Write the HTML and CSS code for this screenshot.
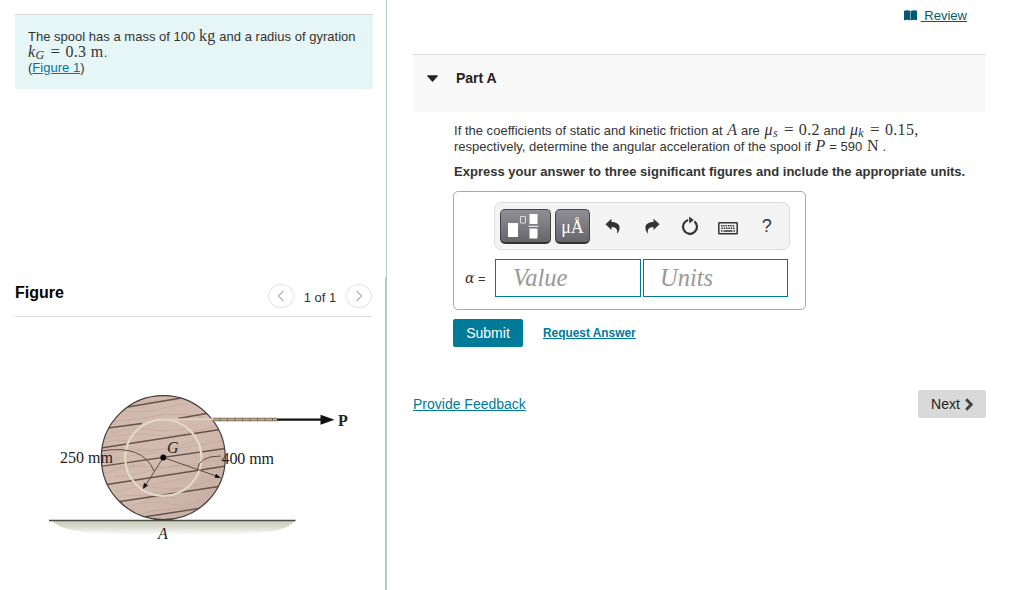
FILE: index.html
```html
<!DOCTYPE html>
<html lang="en">
<head>
  <meta charset="utf-8"/>
  <title>Part A</title>
  <link rel="stylesheet" href="styles.css">
</head>
<body>
<div class="page">

  <div class="left">
    <div class="left-top">
      <div class="problem">
        <div class="line">The spool has a mass of 100 <span class="math">kg</span> and a radius of gyration</div>
        <div class="line"><span class="math"><i>k</i><i class="sub">G</i><span class="eq">=</span>0.3 m</span>.</div>
        <div class="line">(<a href="#">Figure 1</a>)</div>
      </div>
    </div>
    <div class="left-bottom">
      <div class="figure-head">
        <h2>Figure</h2>
        <div class="pager">
          <button class="round"><svg width="8" height="12" viewBox="0 0 8 12"><path d="M6.5 1 L1.5 6 L6.5 11"/></svg></button>
          <span>1 of 1</span>
          <button class="round"><svg width="8" height="12" viewBox="0 0 8 12"><path d="M1.5 1 L6.5 6 L1.5 11"/></svg></button>
        </div>
      </div>
      <svg class="spool" width="370" height="170" viewBox="0 385 370 170">
        <defs>
          <clipPath id="disc"><circle cx="163.3" cy="457.7" r="62"/></clipPath>
          <linearGradient id="ground" x1="0" y1="0" x2="0" y2="1">
            <stop offset="0" stop-color="#cccebe"/>
            <stop offset=".4" stop-color="#d9dace"/>
            <stop offset="1" stop-color="#fff"/>
          </linearGradient>
          <linearGradient id="wood" x1="0" y1="0" x2="1" y2="1">
            <stop offset="0" stop-color="#cfb7ab"/>
            <stop offset=".5" stop-color="#d3bbaf"/>
            <stop offset="1" stop-color="#c6aca1"/>
          </linearGradient>
        </defs>
        <!-- ground -->
        <path d="M52 521 H295 Q284 532 262 532 Q230 537 190 534 Q130 535 95 533 Q62 531 52 521Z" fill="url(#ground)"/>
        <path d="M49 520.5 H295.500" stroke="#484d43" stroke-width="1.5"/>
        <!-- spool -->
        <circle cx="163.3" cy="457.7" r="62" fill="url(#wood)"/>
        <g clip-path="url(#disc)" fill="none">
          <g stroke="#c0a89d" stroke-width=".6">
            <path d="M135 402 q22 -1 42 -2 M125 411 q20 3 42 -4 t44 2 M112 421 q25 -1 42 -5 t50 1"/>
            <path d="M105 438 q25 -6 50 -3 t65 -11 M112 433 q22 -7 43 -3 t45 -7 M98 444 q18 -5 30 -3"/>
            <path d="M102 455 q30 -7 55 -6 t68 -9 M135 451 q28 2 60 -10 M108 462 q28 -10 60 -9"/>
            <path d="M103 474 q25 -9 50 -7 t75 -10 M115 477 q27 -3 47 -9 t58 1 M112 469 q20 -6 34 -2"/>
            <path d="M115 492 q25 -8 45 -4 t55 -9 M130 485 q30 1 60 -9 M120 496 q35 0 60 -8"/>
            <path d="M125 507 q25 -8 46 -3 t38 -9 M140 514 q25 -7 54 -5 M145 500 q20 -4 34 -2"/>
          </g>
          <g stroke="#66534b" stroke-width="1.4">
            <path d="M128 407 L184 397.500"/>
            <path d="M108 428 L142 423.500 M178 418.500 L215 412"/>
            <path d="M101 448 L220 429.500"/>
            <path d="M100 466.500 L225 448.500"/>
            <path d="M107 484.500 L226 466"/>
            <path d="M120 501.500 L222 486"/>
            <path d="M144 517 L202 508"/>
          </g>
        </g>
        <circle cx="163.3" cy="457.7" r="62" fill="none" stroke="#423a38" stroke-width="1.2"/>
        <circle cx="163.3" cy="457.7" r="38.200" fill="none" stroke="#e2dac8" stroke-width="2.2"/>
        <!-- rope and force -->
        <path d="M158 419.300 H215" stroke="#ddd2c3" stroke-width="1.800"/>
        <path d="M213 419.500 H277" stroke="#746752" stroke-width="3.400"/>
        <path d="M213 419.500 H277" stroke="#b9aa8c" stroke-width="1.900" stroke-dasharray="6.500 1"/>
        <path d="M277 419.700 H324" stroke="#111" stroke-width="2.200"/>
        <path d="M320.500 414.700 L334.500 419.700 L320.500 424.700Z" fill="#111"/>
        <!-- radii -->
        <g fill="none" stroke="#4c403c" stroke-width=".9">
          <path d="M163.300 457.500 L144.500 487"/>
          <path d="M163.300 457.500 L219 477"/>
          <path d="M101 451 Q143 444 154 471"/>
          <path d="M197.500 470 Q198 456 221 456"/>
        </g>
        <path d="M142.800 489 L144 482.800 L148 485.500Z M221 478 L214.500 477.700 L216 473.700Z" fill="#111"/>
        <circle cx="163.300" cy="457.500" r="2.900" fill="#000"/>
        <g class="fig-text">
          <text x="60" y="463" textLength="53">250 mm</text>
          <text x="221.500" y="463.500" textLength="52.500">400 mm</text>
          <text x="167" y="453" font-style="italic">G</text>
          <text x="158" y="538.500" font-style="italic">A</text>
          <text x="338" y="426" font-weight="bold">P</text>
        </g>
      </svg>
    </div>
  </div>

  <div class="right">
    <div class="review">
      <svg width="13" height="11" viewBox="0 0 13 11"><path d="M0 .8 Q3 -.4 6 .8 V10.300 Q3 9.300 0 10.300Z M7 .8 Q10 -.4 13 .8 V10.300 Q10 9.300 7 10.300Z" fill="#005a70"/><path d="M6.500 .8 V10.500" stroke="#7fabb6"/></svg>
      <a href="#">&nbsp;Review</a>
    </div>

    <div class="part-head">
      <svg width="11" height="7" viewBox="0 0 11 7"><path d="M.6 .3 H10.400 Q11 .7 10.600 1.200 L6 6.500 Q5.500 7 5 6.500 L.4 1.200 Q0 .7 .6 .3Z" fill="#222"/></svg>
      <h3>Part A</h3>
    </div>

    <div class="part-body">
      <div class="line q1">If the coefficients of static and kinetic friction at <i class="math var">A</i> are <span class="math var"><i>μ</i><i class="sub">s</i><span class="eq">=</span>0.2</span> and <span class="math var"><i>μ</i><i class="sub">k</i><span class="eq">=</span>0.15,</span></div>
      <div class="line q2">respectively, determine the angular acceleration of the spool if <i class="math var">P</i> = 590 <span class="math var">N</span> .</div>
      <p class="instructions">Express your answer to three significant figures and include the appropriate units.</p>

      <div class="answer">
        <div class="toolbar">
          <button class="tool templates">
            <svg width="32" height="26" viewBox="0 0 32 26"><path d="M0 12 H10 V26 H0Z M21.500 3 H29.500 V13 H21.500Z M21.500 17.500 H29.500 V27.500 H21.500Z M20.500 14.700 H30.500 V15.700 H20.500Z" fill="#fff"/><path d="M12.500 5.500 H17.500 V12 H12.500Z" fill="none" stroke="#ddd"/></svg>
          </button>
          <button class="tool units">μÅ</button>
          <span class="icon"><svg width="16" height="17" viewBox="0 0 16 17"><path d="M.5 6.200 L6.500 .8 V4 C12 4 14.600 6.500 14.600 9.800 C14.600 12.500 13 14.800 11.800 16 C13 12 11.500 9 6.500 9 V12Z"/></svg></span>
          <span class="icon"><svg width="16" height="17" viewBox="0 0 16 17"><path d="M15.500 6.200 L9.500 .8 V4 C4 4 1.400 6.500 1.400 9.800 C1.400 12.500 3 14.800 4.200 16 C3 12 4.500 9 9.500 9 V12Z"/></svg></span>
          <span class="icon"><svg width="18" height="20" viewBox="0 0 18 20"><path class="ring" d="M13.400 5.300 A7 7 0 1 1 7.200 4"/><path d="M8 .6 L12.800 4.100 L8.400 7.600Z"/></svg></span>
          <span class="icon"><svg class="keys" width="20" height="13" viewBox="0 0 20 13"><rect x=".8" y=".8" width="18.400" height="11" rx=".6" fill="none" stroke="#333" stroke-width="1.500"/><path d="M3 3.700 H17 M3.500 6.200 H17" stroke="#333" stroke-width="1.500" stroke-dasharray="1.500 .8"/><path d="M3 9 H4.500 M5.500 9 H14.500 M15.500 9 H17" stroke="#333" stroke-width="1.500"/></svg></span>
          <span class="icon help">?</span>
        </div>
        <div class="entry">
          <label><span class="alpha">α</span> =</label>
          <div class="field value">Value</div>
          <div class="field unit">Units</div>
        </div>
      </div>

      <div class="actions">
        <button class="submit">Submit</button>
        <a href="#">Request Answer</a>
      </div>
    </div>

    <div class="bottom">
      <a href="#">Provide Feedback</a>
      <button class="next">Next <svg width="8" height="13" viewBox="0 0 8 13"><path d="M1.200 1.200 L6.200 6.500 L1.200 11.800" fill="none" stroke="#444" stroke-width="2.800"/></svg></button>
    </div>
  </div>

</div>
</body>
</html>
```

FILE: styles.css
```css
* {
  box-sizing: border-box;
}
body {
  margin: 0;
  font-family: "Liberation Sans", Arial, sans-serif;
  font-size: 13px;
  color: #333;
  background: #fff;
}
h2, h3, p {
  margin: 0;
}
button {
  font-family: inherit;
  border: none;
  padding: 0;
}
a {
  color: #007a99;
}
svg {
  display: block;
}
.page {
  display: flex;
  height: 590px;
  overflow: hidden;
}

/* left column */
.left {
  width: 387px;
}
.left-top {
  height: 277px;
  padding: 14px 13px 0 15px;
  border-right: 1px solid #b5c9da;
}
.problem {
  height: 75px;
  padding: 13px 13px 0;
  background: #e6f6f6;
  border-top: 1px solid #d6dada;
}
.line {
  height: 16px;
  line-height: 15px;
  letter-spacing: .015px;
  white-space: nowrap;
}
.math {
  font-family: "Liberation Serif", "Times New Roman", serif;
  font-size: 16px;
  line-height: 1;
  letter-spacing: .35px;
}
.var {
  margin-left: 1px;
}
.sub {
  font-size: 12px;
  position: relative;
  top: 2px;
}
.eq {
  margin: 0 5px 0 6px;
  font-size: 17px;
  line-height: 0;
}
.left-bottom {
  height: 313px;
  border-right: 2px solid #b5c9da;
}
.figure-head {
  display: flex;
  justify-content: space-between;
  width: 357px;
  height: 40px;
  margin-left: 15px;
  border-bottom: 1px solid #ddd;
}
.figure-head h2 {
  padding-top: 6px;
  font-size: 16px;
  line-height: 19px;
  color: #000;
}
.pager {
  display: flex;
  height: 38px;
  align-items: center;
}
.pager span {
  width: 52px;
  padding-top: 3px;
  text-align: center;
}
.round {
  display: flex;
  align-items: center;
  justify-content: center;
  width: 26px;
  height: 24px;
  border: 1px solid #e4e4e4;
  border-radius: 50%;
  background: #fff;
}
.round path {
  fill: none;
  stroke: #bbb;
  stroke-width: 1.5;
}
.spool {
  margin-top: 68px;
}
.fig-text {
  font-family: "Liberation Serif", "Times New Roman", serif;
  font-size: 16px;
  fill: #222;
}

/* right column */
.right {
  width: 599px;
  padding-left: 26px;
}
.review {
  display: flex;
  justify-content: flex-end;
  height: 54px;
  padding: 8px 19px 0 0;
  line-height: 16px;
}
.review svg {
  margin: 2px 4px 0 0;
}
.review a {
  color: #005a70;
}
.part-head {
  display: flex;
  gap: 18px;
  height: 58px;
  padding: 15px 0 0 14px;
  background: #f9f9f9;
  border-top: 1px solid #ddd;
}
.part-head svg {
  margin-top: 5px;
}
.part-head h3 {
  font-size: 14px;
  line-height: 16px;
  color: #222;
}
.part-body {
  padding: 10px 0 0 40px;
}
.q1, .q2, .instructions {
  padding-left: 1px;
}
.instructions {
  padding-top: 10px;
  font-weight: bold;
  line-height: 16px;
  letter-spacing: .015px;
  white-space: nowrap;
}
.answer {
  width: 353px;
  height: 119px;
  margin-top: 11px;
  padding: 10px 0 0 11px;
  border: 1px solid #aaa;
  border-radius: 5px;
}
.toolbar {
  display: flex;
  align-items: center;
  width: 296px;
  height: 48px;
  margin-left: 29px;
  padding-left: 5px;
  background: #f4f4f4;
  border: 1px solid #ddd;
  border-radius: 7px;
}
.tool {
  height: 35px;
  margin-right: 4px;
  border: 1px solid #444;
  border-bottom: 2px solid #333;
  border-radius: 5px;
  background: linear-gradient(#8f8f95, #66666a);
}
.templates {
  width: 51px;
  padding: 0 0 2px 7px;
}
.templates svg {
  overflow: visible;
  margin-top: -2px;
}
.units {
  width: 35px;
  margin-right: 4px;
  padding-top: 3px;
  font-family: "Liberation Serif", serif;
  font-size: 18px;
  color: #fff;
}
.icon {
  display: flex;
  justify-content: center;
  width: 38.400px;
  color: #333;
}
.icon path {
  fill: #333;
}
.icon .ring {
  fill: none;
  stroke: #333;
  stroke-width: 2.2;
}
.keys {
  margin-top: 4px;
}
.help {
  font-size: 18px;
}
.entry {
  display: flex;
  height: 38px;
  margin-top: 9px;
}
.entry label {
  width: 30px;
  padding-top: 11px;
  line-height: 16px;
  white-space: nowrap;
}
.alpha {
  font-family: "DejaVu Serif", serif;
  font-style: italic;
  font-size: 14px;
}
.field {
  padding-left: 17px;
  border: 1px solid #007a99;
  font-family: "Liberation Serif", serif;
  font-style: italic;
  font-size: 24.5px;
  line-height: 36px;
  color: #999;
}
.value {
  width: 146px;
  margin-right: 2px;
}
.unit {
  width: 145px;
  padding-left: 16px;
}
.actions {
  display: flex;
  align-items: center;
  gap: 20px;
  margin-top: 9px;
}
.actions a {
  font-size: 11.9px;
  font-weight: bold;
}
.submit {
  width: 70px;
  height: 28px;
  border-radius: 2px;
  background: #007a99;
  color: #fff;
  font-size: 14px;
}
.bottom {
  display: flex;
  justify-content: space-between;
  padding-top: 43px;
  font-size: 14px;
}
.bottom a {
  padding-top: 6px;
  line-height: 16px;
}
.next {
  display: flex;
  align-items: center;
  justify-content: center;
  gap: 5px;
  width: 68px;
  height: 28px;
  border-radius: 2px;
  background: #d9d9d9;
  color: #222;
  font-size: 14px;
}
```
